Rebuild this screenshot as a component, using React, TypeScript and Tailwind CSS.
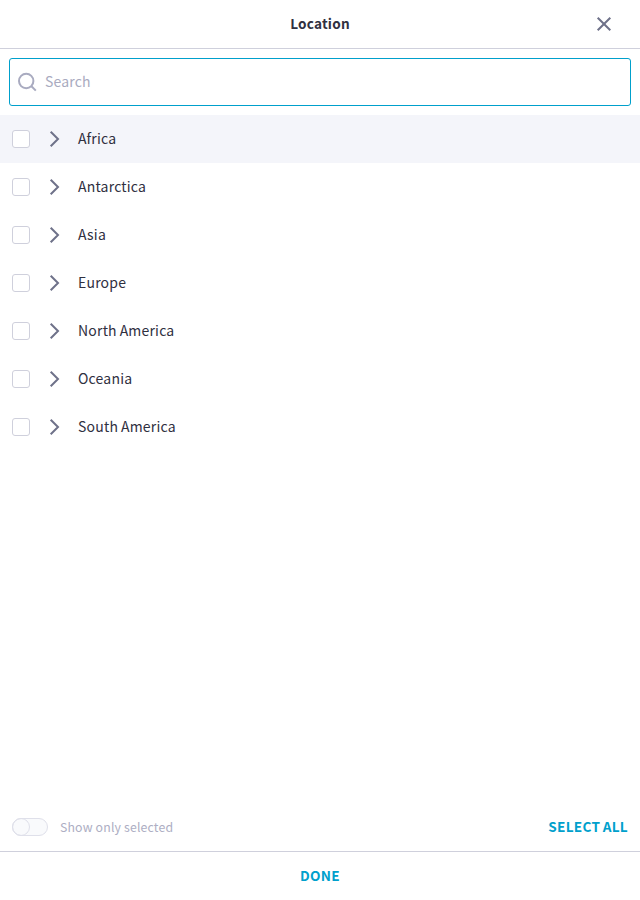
const regions = ['Africa', 'Antarctica', 'Asia', 'Europe', 'North America', 'Oceania', 'South America'];

function Chevron() {
  return (
    <svg className="ml-[19px] h-[18px] w-3 shrink-0" viewBox="0 0 12 18" fill="none" stroke="#6e7189" strokeWidth="2">
      <path d="M1.7 1.7 9 9l-7.3 7.3" />
    </svg>
  );
}

export default function App() {
  return (
    <div className="flex h-[900px] w-[640px] flex-col bg-white font-['Noto_Sans_CJK_SC',sans-serif] text-[#30303f]">
      <header className="grid h-[49px] shrink-0 grid-cols-[48px_1fr_48px] items-center border-b border-[#cfd0dc]">
        <h1 className="col-start-2 pb-0.5 text-center text-[13.6px] leading-5 font-bold tracking-[0.2px]">Location</h1>
        <button aria-label="Close" className="flex h-12 items-center pl-1">
          <svg className="h-4 w-4" viewBox="0 0 16 16" fill="none" stroke="#6e7189" strokeWidth="2">
            <path d="m1.7 1.7 12.6 12.6M14.3 1.7 1.7 14.3" />
          </svg>
        </button>
      </header>

      <label className="mx-[9px] mt-[9px] flex h-12 shrink-0 items-center rounded-[3px] border border-[#00a0cc] pl-2">
        <svg className="h-5 w-5 shrink-0" viewBox="0 0 20 20" fill="none" stroke="#a9abc0" strokeWidth="2">
          <circle cx="8.2" cy="9" r="7.2" />
          <path d="m13.2 14 4.6 4.6" />
        </svg>
        <input
          placeholder="Search"
          className="ml-[7px] min-w-0 flex-1 pb-0.5 text-[14px] leading-5 tracking-[0.16px] outline-none placeholder:text-[#a9abc0]"
        />
      </label>

      <ul className="mt-[9px]">
        {regions.map((name) => (
          <li key={name} className="flex h-12 items-center pl-3 first:bg-[#f4f5fa]">
            <span className="h-[18px] w-[18px] shrink-0 rounded-[3px] border border-[#cfd0dc] bg-white" />
            <Chevron />
            <span className="ml-[17px] pb-0.5 text-[14px] leading-5 tracking-[0.2px] [word-spacing:-0.5px]">{name}</span>
          </li>
        ))}
      </ul>

      <div className="mt-auto flex h-12 shrink-0 items-center justify-between px-3">
        <div className="flex items-center">
          <span className="flex h-[18px] w-9 rounded-full border border-[#dfe0ea] bg-[#f9fafc]">
            <span className="-my-px -ml-px h-[18px] w-[18px] rounded-full border border-[#dfe0ea]" />
          </span>
          <span className="ml-3 text-[12.3px] leading-5 tracking-[0.16px] text-[#adaec3]">Show only selected</span>
        </div>
        <button className="pb-0.5 text-[13.6px] leading-5 font-bold tracking-[0.3px] text-[#00a0cc] [word-spacing:-1px]">
          SELECT ALL
        </button>
      </div>

      <button className="h-[49px] shrink-0 border-t border-[#cfd0dc] pb-0.5 text-[13.6px] leading-5 font-bold tracking-[0.3px] text-[#00a0cc]">
        DONE
      </button>
    </div>
  );
}
